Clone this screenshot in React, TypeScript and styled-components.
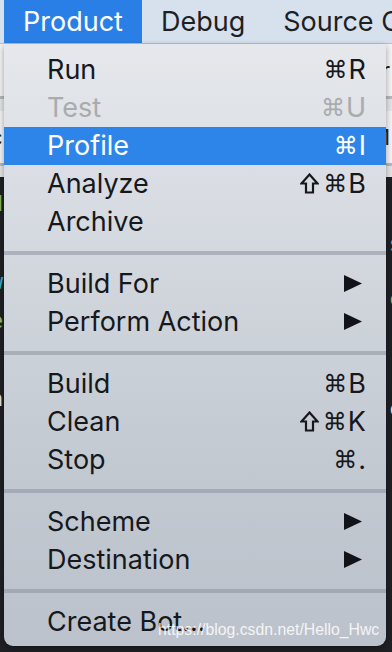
import React from "react";
import styled, { createGlobalStyle } from "styled-components";

const Global = createGlobalStyle`
  html, body { margin: 0; padding: 0; background: #1e1f23; }
  body { font-family: Inter, "Liberation Sans", Arial, sans-serif; }
  #root { width: 392px; height: 652px; }
`;

const Page = styled.div`
  position: relative;
  width: 392px;
  height: 652px;
  overflow: hidden;
  display: flex;
  flex-direction: column;
  background: #1e1f23;
`;

const MenuBar = styled.div`
  height: 44px;
  flex: none;
  display: flex;
  align-items: stretch;
  padding-left: 4px;
  background: #d7e1ee;
  border-bottom: 1px solid #b9c2cc;
  box-sizing: border-box;
`;

const BarItem = styled.div<{ $active?: boolean }>`
  display: flex;
  align-items: center;
  padding: 0 19px;
  font-size: 27px;
  color: ${(p) => (p.$active ? "#ffffff" : "#1d1f24")};
  background: ${(p) => (p.$active ? "#2a7fe6" : "transparent")};
  white-space: nowrap;
`;

const Toolbar = styled.div`
  height: 133px;
  flex: none;
  background: #e3e4e6;
  display: flex;
  flex-direction: column;
  justify-content: space-between;
  font-size: 22px;
  color: #222;
`;

const ToolRow = styled.div<{ $line?: boolean }>`
  display: flex;
  justify-content: space-between;
  align-items: center;
  height: 52px;
  padding: 0 2px 0 0;
  border-bottom: ${(p) => (p.$line ? "3px solid #b8b8ba" : "none")};
  background: ${(p) => (p.$line ? "#f3f3f3" : "transparent")};
`;

const Editor = styled.div`
  flex: 1;
  background: #1f2024;
  display: flex;
  justify-content: space-between;
  padding-top: 14px;
  font-family: "DejaVu Sans Mono", monospace;
  font-size: 22px;
`;

const Gutter = styled.div`
  display: flex;
  flex-direction: column;
  gap: 14px;
  margin-left: -10px;
`;

const RightGutter = styled.div`
  display: flex;
  flex-direction: column;
  gap: 30px;
  margin-right: -10px;
  padding-top: 40px;
`;

const Code = styled.span<{ $c: string }>`
  color: ${(p) => p.$c};
`;

const Menu = styled.div`
  position: absolute;
  left: 4px;
  top: 44px;
  width: 382px;
  height: 602px;
  box-sizing: border-box;
  padding: 7px 0 0;
  border-radius: 0 0 9px 9px;
  background: linear-gradient(180deg, #e6e8ec 0%, #d3d8df 35%, #c3c9d1 70%, #bcc2cb 100%);
  box-shadow: 0 2px 6px rgba(0, 0, 0, 0.35);
  display: flex;
  flex-direction: column;
`;

const Item = styled.div<{ $selected?: boolean; $disabled?: boolean }>`
  height: 38px;
  flex: none;
  display: flex;
  align-items: center;
  justify-content: space-between;
  padding: 0 20px 1px 43px;
  box-sizing: border-box;
  font-size: 27px;
  color: ${(p) => (p.$selected ? "#ffffff" : p.$disabled ? "#a9abae" : "#16181c")};
  background: ${(p) => (p.$selected ? "#2d85ea" : "transparent")};
  white-space: nowrap;
`;

const Shortcut = styled.span`
  font-family: "DejaVu Sans", "Liberation Sans", sans-serif;
  font-size: 24px;
  display: flex;
  align-items: center;
  gap: 1px;
`;

const Key = styled.span`
  font-family: Inter, "Liberation Sans", Arial, sans-serif;
  font-size: 27px;
`;

const ShiftIcon = styled.svg`
  width: 19px;
  height: 21px;
  margin-right: 3px;
`;

const Arrow = styled.svg`
  width: 18px;
  height: 17px;
  margin-right: 4px;
`;

const Separator = styled.div`
  height: 24px;
  flex: none;
  display: flex;
  align-items: center;
  &::after {
    content: "";
    display: block;
    width: 100%;
    height: 4px;
    background: rgba(140, 148, 160, 0.55);
  }
`;

const Watermark = styled.div`
  position: absolute;
  left: 158px;
  top: 621px;
  font-family: "Liberation Sans", Arial, sans-serif;
  font-size: 15.8px;
  color: rgba(255, 255, 255, 0.85);
  white-space: nowrap;
`;

type Entry =
  | { kind: "item"; label: string; shift?: boolean; key?: string; sub?: boolean; selected?: boolean; disabled?: boolean }
  | { kind: "sep" };

const entries: Entry[] = [
  { kind: "item", label: "Run", key: "R" },
  { kind: "item", label: "Test", key: "U", disabled: true },
  { kind: "item", label: "Profile", key: "I", selected: true },
  { kind: "item", label: "Analyze", shift: true, key: "B" },
  { kind: "item", label: "Archive" },
  { kind: "sep" },
  { kind: "item", label: "Build For", sub: true },
  { kind: "item", label: "Perform Action", sub: true },
  { kind: "sep" },
  { kind: "item", label: "Build", key: "B" },
  { kind: "item", label: "Clean", shift: true, key: "K" },
  { kind: "item", label: "Stop", key: "." },
  { kind: "sep" },
  { kind: "item", label: "Scheme", sub: true },
  { kind: "item", label: "Destination", sub: true },
  { kind: "sep" },
  { kind: "item", label: "Create Bot..." },
];

export default function App() {
  return (
    <>
      <Global />
      <Page>
        <MenuBar>
          <BarItem $active>Product</BarItem>
          <BarItem>Debug</BarItem>
          <BarItem>Source Control</BarItem>
        </MenuBar>
        <Toolbar>
          <ToolRow $line>
            <span />
            <span>r</span>
          </ToolRow>
          <ToolRow $line>
            <span style={{ marginLeft: -10 }}>c</span>
            <span>M</span>
          </ToolRow>
          <span />
        </Toolbar>
        <Editor>
          <Gutter>
            <Code $c="#7fb35a">d</Code>
            <Code $c="#6b9c4a">-</Code>
            <Code $c="#2fb3c9">w</Code>
            <Code $c="#8bbf5c">e</Code>
            <Code $c="#c98a4a">-</Code>
            <Code $c="#e0e0e0">n</Code>
          </Gutter>
          <RightGutter>
            <Code $c="#2fb3c9">s</Code>
            <Code $c="#8bbf5c">c</Code>
            <Code $c="#d99040">-</Code>
            <Code $c="#e0e0e0">c</Code>
          </RightGutter>
        </Editor>
        <Menu>
          {entries.map((e, i) =>
            e.kind === "sep" ? (
              <Separator key={i} />
            ) : (
              <Item key={i} $selected={e.selected} $disabled={e.disabled}>
                <span>{e.label}</span>
                {e.sub ? (
                  <Arrow viewBox="0 0 18 17">
                    <path d="M0 0 L18 8.5 L0 17 Z" fill="#111318" />
                  </Arrow>
                ) : e.key ? (
                  <Shortcut>
                    {e.shift && (
                      <ShiftIcon viewBox="0 0 19 21">
                        <path
                          d="M9.5 1.5 L17.5 10.5 L13 10.5 L13 19.5 L6 19.5 L6 10.5 L1.5 10.5 Z"
                          fill="none"
                          stroke="currentColor"
                          strokeWidth="2.2"
                          strokeLinejoin="miter"
                        />
                      </ShiftIcon>
                    )}
                    ⌘
                    <Key>{e.key}</Key>
                  </Shortcut>
                ) : null}
              </Item>
            )
          )}
        </Menu>
        <Watermark>https://blog.csdn.net/Hello_Hwc</Watermark>
      </Page>
    </>
  );
}
